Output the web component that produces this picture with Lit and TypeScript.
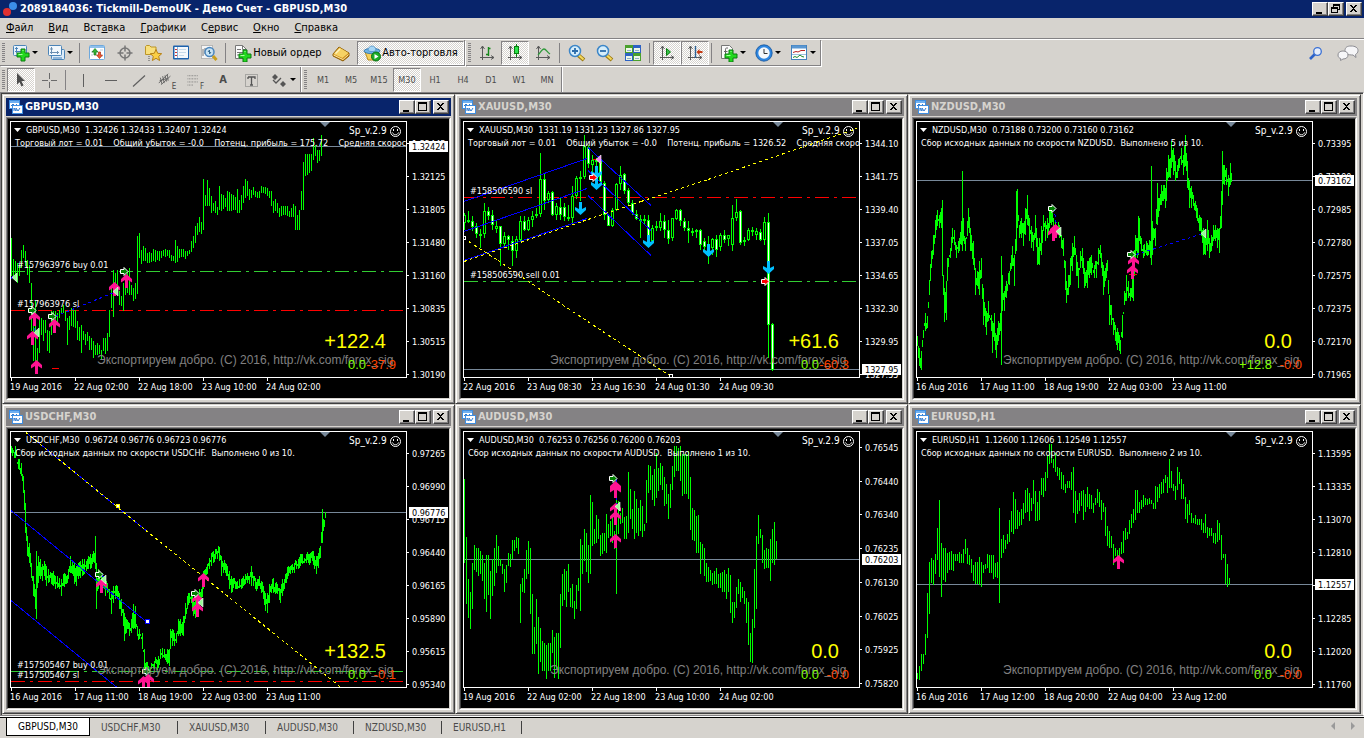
import { LitElement, html, svg, css, nothing } from "lit";
import { customElement, property } from "lit/decorators.js";
import { classMap } from "lit/directives/class-map.js";

type Mark = [kind: string, x: number, y: number];
type Line = [x1: number, y1: number, x2: number, y2: number, kind: string];
type Level = [y: number, color: string, label: string];

/* Series, marks and levels are stored in thirds of a pixel, counted from (ox, oy). */
interface Chart {
  id: string;
  active?: boolean;
  ox: number;
  oy: number;
  quote: string;
  comment: string;
  step?: number;
  noise?: number;
  bars?: string;
  candles?: string;
  prices: [number, string][];
  last: [number, string];
  times: string[];
  levels?: Level[];
  lines?: Line[];
  marks?: Mark[];
  total: string;
  plus: string;
  minus: string;
}

const CHARTS: Chart[] = [
  {
    id: "GBPUSD,M30", active: true, ox: 24, oy: 72, step: 6, noise: 4,
    quote: "1.32426 1.32433 1.32407 1.32424",
    comment: "Торговый лот = 0.01    Общий убыток = -0.0    Потенц. прибыль = 175.72    Средняя скорость",
    bars: "34:430,545 40:492,545 46:500,560 52:505,565 58:510,545 64:465,520 70:450,490 76:470,515 82:495,540 88:510,565 94:565,710 100:640,800 106:620,800 112:760,800 118:675,775 124:670,720 130:675,740 136:675,715 142:705,770 148:710,775 154:650,720 160:650,700 166:650,680 172:655,685 178:645,670 184:640,655 190:632,655 196:650,680 202:670,752 208:665,705 214:640,695 226:645,700 232:680,735 238:697,740 244:690,775 250:710,735 256:718,750 262:712,740 268:725,765 274:730,765 280:740,790 286:750,780 292:745,780 298:752,778 304:765,792 310:730,770 316:730,778 322:715,768 328:645,728 334:575,640 340:525,668 346:535,600 352:525,600 358:590,630 364:605,635 370:565,648 376:540,600 382:530,595 388:520,600 394:570,600 400:580,620 406:565,612 412:425,598 418:415,490 424:465,507 430:453,500 436:460,500 442:475,505 448:472,505 454:475,502 460:462,500 478:470,498 490:467,485 502:465,485 508:467,490 514:480,500 520:485,500 526:435,505 532:453,502 538:463,490 550:462,488 556:468,494 562:468,485 568:465,478 574:438,472 580:425,460 586:393,445 592:385,422 598:367,412 604:382,418 610:252,405 616:300,335 622:255,335 628:280,335 634:305,355 640:325,350 646:318,355 652:337,360 658:275,345 664:297,348 676:310,338 682:290,350 694:297,350 706:307,345 712:283,355 718:315,355 724:300,345 736:252,310 742:258,305 748:282,317 754:285,310 760:277,300 766:290,308 778:290,310 784:275,295 796:278,298 802:280,305 808:290,310 814:290,335 820:320,355 826:312,350 832:325,355 838:340,368 850:335,360 862:335,365 868:348,368 880:328,368 886:335,405 892:360,405 898:345,405 904:290,345 910:202,345 916:178,245 922:178,240 934:178,230 940:130,195 946:150,185 952:165,205 958:165,200 964:120,183",
    prices: [[145, "1.32445"], [244, "1.32125"], [343, "1.31805"], [442, "1.31480"], [541, "1.31160"], [640, "1.30835"], [739, "1.30515"], [838, "1.30190"]],
    last: [154, "1.32424"],
    times: ["19 Aug 2016", "22 Aug 02:00", "22 Aug 18:00", "23 Aug 10:00", "24 Aug 02:00"],
    levels: [[529, "#32cd32", "#157963976 buy 0.01"], [646, "#ff0000", "#157963976 sl"]],
    lines: [[34, 550, 40, 545, "blueDash"], [100, 645, 106, 712, "blueDash"], [166, 664, 343, 592, "blueDash"], [156, 820, 177, 820, "red"]],
    marks: [["up", 102, 652], ["up", 97, 708], ["up", 110, 797], ["up", 163, 672], ["up", 343, 562], ["up", 379, 538], ["buy", 96, 645], ["buy", 156, 664], ["buy", 373, 529], ["exit", 53, 547], ["exit", 119, 712], ["exit", 354, 589]],
    total: "+122.4", plus: "0.0", minus: "-37.9",
  },
  {
    id: "XAUUSD,M30", ox: 18, oy: 72,
    quote: "1331.19 1331.23 1327.86 1327.95",
    comment: "Торговый лот = 0.01    Общий убыток = -0.0    Потенц. прибыль = 1326.52    Средняя скорость",
    candles: "355,360,385,405u 348,375,378,385u 365,378,398,410d 385,395,418,430d 402,418,420,460d 325,348,418,430u 338,350,365,375d 345,362,390,405d 380,395,402,415u 393,395,447,515d 412,425,447,455u 422,424,437,465d 425,438,470,515d 425,432,470,490u 365,380,435,440u 365,380,405,410d 367,375,405,408u 350,363,375,398u 340,357,363,370u 175,252,357,367u 235,252,320,345d 290,295,315,325u 290,293,360,365d 325,335,362,375u 310,338,362,375d 325,338,368,378d 330,368,370,380u 275,305,370,385u 243,250,305,312u 230,247,250,320u 120,155,248,252u 150,157,207,220d 180,195,210,245u 190,196,200,250d 190,195,262,270d 260,265,362,375d 360,362,393,395d 340,347,395,397u 265,268,347,350u 213,240,268,285u 235,238,288,298d 280,285,325,330d 315,325,355,360d 345,357,373,375d 360,373,377,430d 362,373,378,390u 360,375,430,435d 390,400,440,448u 380,395,400,410u 355,380,400,410u 360,380,405,430d 375,405,433,447d 370,370,430,440u 343,345,372,375u 342,345,378,395d 370,380,400,410d 378,400,410,445d 400,410,412,425u 402,405,412,430d 402,405,452,465d 430,440,458,468d 425,460,485,507d 430,432,460,480u 420,432,465,488d 415,420,458,470u 405,420,435,445d 420,422,432,455u 330,370,452,470u 312,352,370,380u 345,350,445,450d 428,437,443,455u 400,405,437,440u 398,405,412,425d 400,408,422,435u 402,412,435,440d 368,383,437,450u 355,382,690,790d 685,688,825,828d",
    prices: [[145, "1344.10"], [244, "1341.75"], [343, "1339.40"], [442, "1337.05"], [541, "1334.65"], [640, "1332.30"], [739, "1329.95"], [838, "1327.55"]],
    last: [823, "1327.95"],
    times: ["22 Aug 2016", "23 Aug 08:30", "23 Aug 16:30", "24 Aug 01:30", "24 Aug 09:30"],
    levels: [[307, "#ff0000", "#158506590 sl"], [559, "#32cd32", "#158506590 sell 0.01"]],
    lines: [[28, 320, 397, 190, "blue"], [28, 409, 397, 281, "blue"], [28, 496, 397, 371, "blue"], [400, 157, 590, 331, "blue"], [400, 227, 590, 406, "blue"], [400, 302, 590, 482, "blue"], [28, 498, 400, 372, "yellow"], [400, 372, 560, 320, "yellow"], [560, 320, 760, 253, "yellow"], [760, 253, 1206, 100, "yellow"], [28, 430, 130, 497, "yellow"], [130, 497, 340, 640, "yellow"], [340, 640, 650, 845, "yellow"], [415, 194, 427, 194, "red"]],
    marks: [["down", 376, 322], ["down", 424, 215], ["down", 424, 247], ["down", 580, 421], ["down", 760, 448], ["down", 940, 499], ["sell", 415, 247], ["sell", 931, 559], ["pinkExit", 438, 194], ["box", 28, 430], ["box", 649, 845]],
    total: "+61.6", plus: "0.0", minus: "-60.3",
  },
  {
    id: "NZDUSD,M30", ox: 18, oy: 72, step: 3, noise: 34,
    quote: "0.73188 0.73200 0.73160 0.73162",
    comment: "Сбор исходных данных по скорости NZDUSD.  Выполнено 5 из 10.",
    bars: "28:725,755 34:760,815 40:770,825 46:705,730 52:655,710 58:665,700 64:555,600 70:470,520 76:420,480 82:375,430 88:345,395 94:360,400 100:340,400 103:315,545 106:540,600 109:580,683 115:560,675 118:490,560 127:460,490 133:400,445 139:405,450 145:450,490 154:430,470 160:380,450 163:230,470 166:370,440 172:430,470 178:380,425 181:340,400 187:400,470 196:440,510 202:520,600 208:530,575 214:500,600 220:490,550 226:580,690 234:650,720 242:620,680 250:660,710 254:680,775 260:655,740 265:720,790 271:680,740 277:655,710 280:485,810 283:540,650 289:590,650 295:560,610 304:530,570 313:455,515 319:480,575 325:290,470 328:282,400 334:390,430 340:370,430 346:385,455 352:340,420 358:300,390 364:370,440 370:395,460 376:420,470 382:360,430 388:430,510 394:430,510 400:395,480 406:360,410 412:380,440 418:370,430 424:350,400 430:345,390 436:370,400 442:380,410 454:390,430 460:420,460 466:430,485 472:500,585 475:560,625 481:540,600 487:490,570 493:445,530 499:425,480 505:480,545 511:520,580 517:470,520 523:460,520 530:520,580 538:500,580 545:490,550 551:480,540 560:510,550 566:500,550 572:460,510 578:450,490 586:510,600 592:520,560 598:495,530 604:600,690 610:630,690 616:670,720 622:690,740 628:700,765 634:720,770 637:735,778 643:660,730 649:590,630 655:540,620 661:560,610 667:580,620 673:530,610 676:470,620 682:420,490 688:430,490 691:365,480 694:370,440 700:430,470 706:450,490 715:440,480 721:450,480 727:440,490 730:215,510 733:380,480 742:400,455 748:265,390 754:310,350 760:270,330 766:270,320 772:280,340 775:220,320 781:180,250 787:190,250 790:140,220 796:160,240 802:200,260 808:210,250 814:190,220 820:160,210 826:180,240 832:122,215 838:200,280 844:260,340 850:275,340 856:300,335 862:320,350 868:340,380 874:360,410 880:370,425 886:400,480 892:420,480 898:375,470 904:430,490 910:420,470 916:390,440 922:390,440 928:400,460 934:400,475 940:290,400 943:168,330 949:210,270 955:220,270 961:240,305 967:205,270 970:235,262",
    prices: [[145, "0.73395"], [244, "0.73190"], [343, "0.72985"], [442, "0.72780"], [541, "0.72575"], [640, "0.72375"], [739, "0.72170"], [838, "0.71965"]],
    last: [256, "0.73162"],
    times: ["16 Aug 2016", "17 Aug 11:00", "18 Aug 19:00", "22 Aug 03:00", "23 Aug 11:00"],
    lines: [[439, 340, 448, 400, "blueDash"], [685, 477, 886, 415, "blueDash"], [664, 538, 688, 538, "red"]],
    marks: [["up", 436, 397], ["up", 442, 388], ["up", 676, 484], ["up", 673, 511], ["buy", 432, 340], ["buy", 670, 478], ["exit", 461, 409], ["exit", 896, 415]],
    total: "0.0", plus: "+12.8", minus: "-0.0",
  },
  {
    id: "USDCHF,M30", ox: 24, oy: 78, step: 3, noise: 30,
    quote: "0.96724 0.96776 0.96723 0.96776",
    comment: "Сбор исходных данных по скорости USDCHF.  Выполнено 0 из 10.",
    bars: "34:130,150 46:130,165 55:170,200 64:180,220 70:220,270 76:300,390 82:400,460 88:420,480 94:480,525 100:520,580 106:560,620 109:445,648 115:460,540 121:470,530 127:485,535 133:475,520 139:490,550 145:500,540 154:510,545 160:505,550 166:520,560 172:520,555 178:525,560 184:530,580 190:515,550 196:515,545 205:500,530 211:460,510 217:475,515 223:480,545 229:490,550 235:480,530 241:475,525 247:470,520 253:470,515 259:475,505 265:460,500 271:455,500 277:455,485 283:450,480 286:400,500 289:480,620 295:500,560 304:510,550 316:530,580 322:540,570 328:560,590 334:565,635 340:550,600 346:550,590 352:550,590 358:570,620 364:590,640 370:620,670 373:630,715 379:650,690 388:660,700 394:650,690 400:605,680 406:610,680 412:670,700 418:680,710 427:690,740 433:740,800 436:780,815 445:790,810 454:780,800 463:775,800 475:760,795 481:740,770 487:735,765 493:740,765 502:740,785 508:740,790 511:680,740 517:680,730 523:690,730 529:690,720 535:650,700 541:650,700 550:640,700 556:600,650 562:580,620 568:570,600 574:575,600 580:590,640 586:590,645 592:570,640 598:560,620 604:560,610 610:505,560 616:500,530 622:485,515 628:465,500 634:450,490 640:445,480 646:440,470 652:445,470 658:432,475 664:460,520 670:480,510 676:480,510 682:490,520 688:505,560 694:520,570 700:525,555 706:535,560 712:535,560 718:530,555 724:530,560 730:520,550 736:515,545 742:510,540 748:520,545 754:490,550 760:520,550 766:525,560 772:530,560 778:520,550 784:535,570 790:550,590 796:570,625 802:570,630 808:545,600 814:545,570 820:525,570 826:540,575 832:545,575 841:560,600 847:530,580 853:530,560 859:510,540 865:490,520 871:490,515 877:485,510 883:480,510 889:475,500 895:470,500 901:455,490 907:455,485 913:465,480 919:455,480 925:455,480 931:450,480 937:445,475 943:460,500 949:460,515 955:450,495 961:430,465 967:318,420 970:350,385 976:328,345",
    prices: [[151, "0.97265"], [250, "0.96990"], [349, "0.96715"], [448, "0.96440"], [547, "0.96165"], [646, "0.95890"], [745, "0.95615"], [844, "0.95340"]],
    last: [328, "0.96776"],
    times: ["16 Aug 2016", "17 Aug 11:00", "18 Aug 19:00", "22 Aug 03:00", "23 Aug 11:00"],
    levels: [[805, "#32cd32", "#157505467 buy 0.01"], [835, "#ff0000", "#157505467 sl"]],
    lines: [[78, 88, 440, 382, "blue"], [34, 322, 440, 655, "blue"], [34, 592, 352, 852, "blue"], [78, 88, 440, 382, "yellow"], [440, 382, 1024, 852, "yellow"], [307, 514, 313, 526, "blueDash"], [592, 570, 602, 600, "blueDash"]],
    marks: [["up", 304, 528], ["up", 610, 510], ["up", 592, 573], ["up", 592, 600], ["up", 430, 820], ["up", 445, 814], ["buy", 297, 514], ["buy", 586, 570], ["buy", 440, 805], ["exit", 320, 529], ["exit", 611, 598], ["box", 355, 311], ["blueBox", 442, 655]],
    total: "+132.5", plus: "0.0", minus: "-0.1",
  },
  {
    id: "AUDUSD,M30", ox: 18, oy: 78, step: 6, noise: 0,
    quote: "0.76253 0.76256 0.76200 0.76203",
    comment: "Сбор исходных данных по скорости AUDUSD.  Выполнено 1 из 10.",
    bars: "28:228,480 34:402,605 40:528,645 46:568,678 52:480,618 58:427,503 64:435,507 70:435,520 76:445,515 82:458,535 88:480,588 94:456,627 100:456,577 106:505,648 112:468,580 118:435,550 124:397,512 130:430,490 136:468,490 142:485,515 148:498,567 154:487,540 160:450,490 166:455,492 172:412,470 178:412,445 184:402,435 190:405,455 196:545,660 202:525,568 208:498,572 214:443,530 220:415,515 226:435,635 232:575,755 238:672,755 244:588,725 250:643,815 256:675,778 262:714,805 268:720,805 274:728,828 280:722,805 286:720,805 292:682,752 298:703,825 304:690,800 310:690,828 316:575,735 322:515,610 328:500,592 334:505,612 340:483,568 346:555,612 352:545,615 358:595,650 364:548,618 370:525,565 376:410,625 382:427,515 388:380,475 394:390,508 400:428,540 406:277,515 412:298,430 418:380,425 424:337,420 430:350,408 436:397,460 442:390,455 448:390,445 454:335,450 460:365,405 466:355,400 472:335,420 478:385,440 484:290,575 490:295,395 496:330,365 502:315,362 508:342,410 514:340,408 520:207,390 526:260,348 532:320,380 538:265,410 544:288,390 550:315,400 556:292,385 562:310,403 568:365,385 574:232,360 580:187,270 586:190,262 592:217,292 598:200,310 604:150,285 610:195,265 616:182,248 622:190,262 628:222,310 634:245,305 640:275,350 646:245,315 652:190,262 658:130,222 664:130,205 670:135,205 676:130,235 682:155,280 688:155,275 694:155,275 700:145,290 706:222,382 712:315,412 718:322,415 724:340,450 730:337,452 736:417,515 742:425,470 748:437,520 754:480,537 760:492,538 766:502,535 772:512,547 778:505,545 784:495,545 790:513,555 796:512,555 802:507,567 808:502,567 814:515,588 820:495,567 826:518,630 832:597,662 838:597,645 844:552,615 850:528,575 856:537,597 862:552,585 868:565,605 874:585,660 880:597,728 886:690,777 892:648,782 898:498,675 904:400,618 910:337,425 916:378,405 922:397,480 928:443,500 934:435,495 940:440,497 946:408,535 952:380,480 958:357,488 964:415,468",
    prices: [[133, "0.76545"], [235, "0.76440"], [334, "0.76340"], [436, "0.76235"], [538, "0.76130"], [640, "0.76025"], [739, "0.75925"], [841, "0.75820"]],
    last: [469, "0.76203"],
    times: ["19 Aug 2016", "22 Aug 02:00", "22 Aug 18:00", "23 Aug 10:00", "24 Aug 02:00"],
    lines: [[484, 226, 484, 310, "blueDash"]],
    marks: [["up", 481, 235], ["up", 481, 244], ["up", 481, 300], ["up", 481, 324], ["up", 481, 393], ["buy", 475, 227], ["exit", 497, 311]],
    total: "0.0", plus: "0.0", minus: "-0.0",
  },
  {
    id: "EURUSD,H1", ox: 18, oy: 78, step: 6, noise: 0,
    quote: "1.12600 1.12606 1.12549 1.12557",
    comment: "Сбор исходных данных по скорости EURUSD.  Выполнено 2 из 10.",
    bars: "28:812,830 34:790,833 40:753,805 46:753,785 52:693,758 58:570,705 64:477,635 70:465,542 76:472,547 82:455,515 88:375,472 94:292,522 100:420,582 106:437,533 112:435,537 118:450,512 124:447,502 130:445,502 136:453,505 142:455,475 148:453,475 154:447,480 160:455,480 166:440,482 172:410,455 178:437,485 184:457,487 190:468,510 196:487,535 202:477,545 208:477,545 214:462,547 220:477,552 226:488,510 232:485,500 238:455,495 244:457,512 250:457,512 256:457,530 262:480,522 268:477,525 274:315,602 280:410,465 286:397,452 292:413,440 298:393,425 304:352,417 310:325,387 316:267,395 322:288,380 328:322,380 334:327,370 340:320,367 346:300,348 352:262,330 358:255,327 364:272,355 370:285,325 376:232,305 382:265,355 388:297,355 394:265,352 400:225,278 406:225,282 412:207,265 418:160,225 424:125,185 430:125,182 436:170,195 442:150,207 448:192,220 454:195,232 460:207,258 466:217,262 472:245,272 478:235,257 484:235,255 490:207,262 496:192,330 502:265,362 508:292,335 514:272,325 520:265,310 526:262,352 532:273,327 538:252,312 544:275,320 550:277,320 556:300,330 562:285,308 568:258,300 574:267,312 580:293,353 586:300,327 592:312,400 598:370,430 604:385,437 610:400,437 616:425,488 622:435,460 628:442,470 634:435,470 640:418,455 646:385,452 652:375,413 658:387,410 664:352,395 670:333,375 676:320,362 682:262,353 688:262,332 694:297,330 700:292,318 706:277,312 712:285,307 718:288,308 724:285,305 730:292,305 736:300,320 742:250,320 748:252,297 754:243,285 760:237,273 766:228,272 772:218,242 778:222,272 784:168,255 790:205,257 796:243,265 802:250,292 808:192,262 814:207,245 820:228,290 826:243,290 832:282,350 838:303,360 844:292,337 850:330,362 856:347,362 862:337,365 868:348,368 874:348,367 880:350,382 886:360,392 892:333,390 898:372,405 904:375,400 910:375,400 916:390,422 922:390,425 928:353,418 934:360,412 940:397,472 946:455,467 952:453,543 958:485,552 964:525,548",
    prices: [[151, "1.13595"], [250, "1.13335"], [349, "1.13070"], [448, "1.12810"], [547, "1.12550"], [646, "1.12285"], [745, "1.12020"], [844, "1.11760"]],
    last: [544, "1.12557"],
    times: ["16 Aug 2016", "17 Aug 12:00", "18 Aug 20:00", "22 Aug 04:00", "23 Aug 12:00"],
    marks: [["up", 631, 457]],
    total: "0.0", plus: "0.0", minus: "-0.0",
  },
];

const AXES = svg`<path d="M3.5 1v14M1 12.500h14M1.500 4l2-3 2 3M12 10.500l3 2-3 2" fill="none" stroke="#5a5a5a"/>`;
const PLUS = svg`<path d="M9 6h4v4h4v4h-4v4h-4v-4h-4v-4h4z" fill="#22d81e" stroke="#0a7d10"/><path d="M10.500 7.500h1M6.500 11.500h4" stroke="#a8ffa0"/>`;
const HANDLE = svg`<path d="M10 11l6 5" stroke="#9c7a12" stroke-width="4"/><path d="M10.500 11l5 4.500" stroke="#f5d95c" stroke-width="2"/>`;

const ICONS: Record<string, unknown> = {
  newChart: svg`<rect x="1.500" y="1.500" width="13" height="10" rx="1" fill="#e9f3fc" stroke="#4b84b8"/><path d="M4.500 3v6M3 7.500h7M3 4.500h3" stroke="#4b84b8"/><g transform="translate(0 -1)">${PLUS}</g>`,
  profiles: svg`<rect x="4.500" y="5.500" width="13" height="10" rx="1" fill="#dcebf8" stroke="#4b84b8"/><rect x="1.500" y="1.500" width="13" height="10" rx="1" fill="#f2f8fd" stroke="#4b84b8"/><path d="M4.500 3v7M3 8.500h9M10.500 7v3M3 5h3" stroke="#6b8fb2"/><path d="M6 14h9" stroke="#8fb6da" stroke-width="2"/>`,
  market: svg`<rect x="1.500" y="1.500" width="15" height="14" rx="1" fill="#fff" stroke="#6ea8dc"/><path d="M2 3h14" stroke="#8fc0ec" stroke-width="2"/><path d="M3 8h2M3 11h2M12 6h3M12 12h3" stroke="#b9c9d8"/><path d="M4 8l3-3.500 3 3.500h-2v3h-2v-3z" fill="#35b335" stroke="#1a7d1a" stroke-width=".7"/><path d="M8.500 11l3 3.500 3-3.500h-2V8h-2v3z" fill="#ee5a34" stroke="#b02b10" stroke-width=".7"/>`,
  cross: svg`<circle cx="9" cy="9" r="5" fill="none" stroke="#777" stroke-width="1.500"/><path d="M9 1.500v6M9 10.500v6M1.500 9h6M10.500 9h6" stroke="#777" stroke-width="1.500"/>`,
  star: svg`<path d="M1.500 10.500V2.500l1-1h3l1.500 1.500h5v7.500z" fill="#f8df7c" stroke="#bb9528"/><path d="M5 12v5" stroke="#555" stroke-dasharray="1 1"/><path d="M12 5.500l1.700 3.800 4 .4-3 2.700.9 4.100-3.600-2.200-3.600 2.200.9-4.100-3-2.700 4-.4z" fill="#fbcf45" stroke="#b78116"/>`,
  terminal: svg`<rect x="1" y="1.500" width="16" height="14" rx="1" fill="#1d62ad"/><rect x="6" y="3" width="10" height="11" fill="#f4f8fc"/><rect x="2.500" y="3" width="3" height="11" fill="#fff"/><path d="M3 5.500h2M3 8.500h2M3 11.500h2" stroke="#c33"/><path d="M7 5.500h7M7 8.500h7M7 11.500h5" stroke="#c5d9ea"/>`,
  tester: svg`<rect x="1.500" y="1.500" width="11" height="13" fill="#f5f5f5" stroke="#8b8b8b" stroke-dasharray="1 1"/><path d="M3 12V5M5 10V4M10 5V3" stroke="#777"/><circle cx="9.500" cy="8" r="4.500" fill="#bfe0f5" fill-opacity=".85" stroke="#4b86bd" stroke-width="1.500"/><path d="M13 12l3.500 4" stroke="#c99f1d" stroke-width="3"/><path d="M8 8l1.500-2v4l1.500-2" fill="none" stroke="#35688f"/>`,
  order: svg`<path d="M1.500 1.500h7l4 4v9h-11z" fill="#fafafa" stroke="#777"/><path d="M8.500 1.500v4h4M3 5.500h4M3 8.500h7M3 11h5" fill="none" stroke="#777"/>${PLUS}`,
  gold: svg`<path d="M1 10l6-7 10 6v3l-6 5L1 12z" fill="#c98512" stroke="#8f5f06"/><path d="M1.500 10L7.500 3.500l9 5.500-6 5z" fill="#f6d264"/><path d="M3.500 9.500l4.500-4.500" stroke="#fff3bd" stroke-width="1.500"/><path d="M1.500 11l9.500 4.500 5.500-5" fill="none" stroke="#fce9a4"/>`,
  auto: svg`<path d="M2 8l3 8h8l3-8z" fill="#f6d05a" stroke="#b98c1c"/><ellipse cx="9" cy="7" rx="8" ry="2.700" fill="#6fb4e6" stroke="#2b6ea5" stroke-width=".8"/><path d="M5 6.500c0-6 8-6 8 0-2 1.500-6 1.500-8 0z" fill="#a6d6f5" stroke="#4b8fc4" stroke-width=".8"/><circle cx="13" cy="12.500" r="4.500" fill="#1cae28" stroke="#087012"/><path d="M11.500 10l4 2.500-4 2.500z" fill="#fff"/>`,
  bars: svg`<g transform="translate(1 1)">${AXES}</g><path d="M10.500 3v9M10.500 4.500h2M8 10.500h2" stroke="#16881b" stroke-width="1.400"/>`,
  candles: svg`<g transform="translate(1 1)">${AXES}</g><path d="M10.500 0v13" stroke="#0a7d10"/><rect x="8.500" y="2.500" width="4" height="7" fill="#2be34a" stroke="#0a7d10"/>`,
  line: svg`<g transform="translate(1 1)">${AXES}</g><path d="M4 11c2-2 4-6 6-6s3 3 6 5" fill="none" stroke="#2e9a3a" stroke-width="1.300"/>`,
  zoomIn: svg`${HANDLE}<circle cx="7" cy="7" r="5.500" fill="#d6eefb" stroke="#3c86c8" stroke-width="1.500"/><path d="M4 7h6M7 4v6" stroke="#2b6cab" stroke-width="1.800"/>`,
  zoomOut: svg`${HANDLE}<circle cx="7" cy="7" r="5.500" fill="#d6eefb" stroke="#3c86c8" stroke-width="1.500"/><path d="M4 7h6" stroke="#2b6cab" stroke-width="1.800"/>`,
  tile: svg`<rect x="1" y="1" width="8" height="8" fill="#4aa02c"/><rect x="9" y="1" width="8" height="8" fill="#2d62c4"/><rect x="1" y="9" width="8" height="8" fill="#2d62c4"/><rect x="9" y="9" width="8" height="8" fill="#4aa02c"/><path d="M2 6h6M10 6h6M2 14h6M10 14h6" stroke="#eef7e8" stroke-width="4"/><path d="M3 6.500h4M11 6.500h4M3 14.500h4M11 14.500h4" stroke="#8fb0c8"/>`,
  scroll: svg`<g transform="translate(1 1)">${AXES}</g><path d="M8.500 4.500l4 3.500-4 3.500z" fill="#35c048" stroke="#0a7d10"/>`,
  shift: svg`<g transform="translate(1 1)">${AXES}</g><path d="M9.500 2v12" stroke="#2c6396" stroke-width="1.400"/><path d="M10.500 8l3-3v2h3v2h-3v2z" fill="#c63a12"/>`,
  indicators: svg`<path d="M1.500 1.500h8l3 3v10h-11z" fill="#fafafa" stroke="#777"/><path d="M8 4h-1.500c-1 0-1 1-1 2v6M4 7.500h3.500" stroke="#666" fill="none"/>${PLUS}`,
  clock: svg`<circle cx="9" cy="9" r="7" fill="#f5f8fb" stroke="#2f86e0" stroke-width="2.600"/><circle cx="9" cy="9" r="8.200" fill="none" stroke="#0d4a91" stroke-width=".7"/><path d="M9 5v4.500h3.500" fill="none" stroke="#333"/>`,
  template: svg`<rect x="1.500" y="1.500" width="15" height="14" fill="#fff" stroke="#4381bd"/><path d="M2 3h14" stroke="#5a97d2" stroke-width="3"/><path d="M3 8.500l3-1 2 .5 3-1.500h4" fill="none" stroke="#b22"/><path d="M3 13.500l2-1 2 1 3-2.500 2 1.500 2 .5" fill="none" stroke="#1b8a2a"/><path d="M2 10.500h14" stroke="#9fc0de"/>`,
  cursor: svg`<path d="M5 2l8 8H9.500l2 4.500-2 1-2-4.500L5 13.500z" fill="#4b4b4b"/>`,
  plus: svg`<path d="M9.500 2v6M9.500 11v6M2 9.500h6M11 9.500h6" stroke="#6b6b6b"/>`,
  vline: svg`<path d="M9.500 3v13" stroke="#5f5f5f"/>`,
  hline: svg`<path d="M3 9.500h12" stroke="#5f5f5f"/>`,
  trend: svg`<path d="M3 15.500L15 4.500" stroke="#5f5f5f" stroke-width="1.200"/>`,
  channel: svg`<path d="M1 13L13 1M4 15L16 4M3 6l2 8M6 4l2 9M9 3l2 8M12 2l1 8M2 10l10-3" stroke="#5b5b5b" stroke-width="1.100"/>`,
  fibo: svg`<path d="M2 3.500h14M2 7.500h14M2 11.500h14M2 15.500h7" stroke="#666" stroke-dasharray="1 1"/>`,
  text: svg`<rect x="3.500" y="3.500" width="12" height="12" fill="none" stroke="#777" stroke-dasharray="1 1"/><path d="M6 6h7v2M6 8V6M9.500 6v8M8 14h3" fill="none" stroke="#555" stroke-width="1.300"/>`,
  arrows: svg`<path d="M2 6l3-3 3 3-3 3zM10 13l3-3 3 3-3 3z" fill="#555"/><path d="M3 9l3 3 5-5" fill="none" stroke="#555" stroke-width="1.300"/>`,
  search: svg`<path d="M3 15l5-5" stroke="#2c62c8" stroke-width="2.600"/><circle cx="10.500" cy="7.500" r="3.800" fill="#e6eefb" stroke="#3a70d4" stroke-width="1.300"/>`,
};

const icon = (name: string) => html`<svg class="icon" viewBox="0 0 18 18" aria-hidden="true">${ICONS[name]}</svg>`;

const CAPTION = {
  min: svg`<path d="M3 9h6v2H3z" fill="#000"/>`,
  max: svg`<path d="M2 1h9v9H2zM3 3v6h7V3z" fill="#000" fill-rule="evenodd"/>`,
  restore: svg`<path d="M4 1h7v6H9V6h1V3H5v1H4zM2 4h7v6H2zM3 6v3h5V6z" fill="#000" fill-rule="evenodd"/>`,
  close: svg`<path d="M3 2h2v1h1v1h1V3h1V2h2v1H9v1H8v1H7v1h1v1h1v1h1v1H8V8H7V7H6v1H5v1H3V8h1V7h1V6h1V5H5V4H4V3H3z" fill="#000" shape-rendering="crispEdges"/>`,
};

const captionStyles = css`
  .cap {
    box-sizing: border-box;
    width: 16px;
    height: 14px;
    padding: 0;
    border: 1px solid;
    border-color: #fff #404040 #404040 #fff;
    box-shadow: inset -1px -1px #848284;
    background: #d6d3ce;
    display: block;
  }
  .cap svg { display: block; width: 13px; height: 12px; }
  .cap.gap { margin-left: 2px; }
`;

const capButton = (kind: keyof typeof CAPTION, label: string, gap = false) => html`
  <button class=${classMap({ cap: true, gap })} aria-label=${label}><svg viewBox="0 0 13 12">${CAPTION[kind]}</svg></button>`;

@customElement("chart-window")
export class ChartWindow extends LitElement {
  @property({ attribute: false }) chart!: Chart;

  static styles = [captionStyles, css`
    :host { display: block; min-width: 0; font-family: "DejaVu Sans Condensed", "DejaVu Sans", sans-serif; }
    .frame {
      box-sizing: border-box;
      height: 100%;
      display: flex;
      flex-direction: column;
      border: 1px solid;
      border-color: #d6d3ce #404040 #404040 #d6d3ce;
      box-shadow: inset 1px 1px #fff, inset -1px -1px #848284;
      background: #d6d3ce;
      padding: 3px;
    }
    .bar {
      display: flex;
      align-items: center;
      height: 18px;
      padding: 0 2px 0 3px;
      background: #848284;
      color: #d6d3ce;
    }
    .bar.active { background: #08246b; color: #fff; }
    .bar .name { flex: 1; margin: 0; font-size: 11px; line-height: 18px; padding-left: 2px; }
    .doc { width: 14px; height: 14px; }
    .client {
      flex: 1;
      min-height: 0;
      margin-top: 1px;
      border: 1px solid;
      border-color: #848284 #fff #fff #848284;
      display: flex;
    }
    .canvas {
      flex: 1;
      min-width: 0;
      border: 1px solid;
      border-color: #404040 #d6d3ce #d6d3ce #404040;
      background: #000;
      overflow: hidden;
    }
    .plot { display: block; width: 100%; height: 100%; }
    text { fill: #fff; font-size: 9px; white-space: pre; }
    .version { font-size: 10px; }
    .dark { fill: #000; }
    .mark { font-family: "Liberation Sans", Arial, sans-serif; font-size: 12px; fill: #808080; }
    .total { font-family: "Liberation Sans", Arial, sans-serif; font-size: 20px; fill: #ff0; }
    .sub { font-family: "Liberation Sans", Arial, sans-serif; font-size: 13px; }
    .plus { fill: #7fff00; }
    .minus { fill: #ff4500; }
    .blue { stroke: #00f; }
    .blueDash { stroke: #00f; stroke-dasharray: 3 3; }
    .yellow { stroke: #ff0; stroke-dasharray: 3 3; }
    .red { stroke: #f00; }
  `];

  private px(v: number) { return Math.floor((v - this.chart.ox) / 3); }
  private py(v: number) { return Math.floor((v - this.chart.oy) / 3); }

  private barPath() {
    const { bars, step = 6, noise = 0 } = this.chart;
    if (!bars) return "";
    const keys = bars.split(" ").map((k) => k.split(/[:,]/).map(Number));
    let seed = 7;
    const rnd = () => { seed = (seed * 1103515245 + 12345) % 2147483648; return seed / 2147483648 - 0.5; };
    let d = "";
    for (let i = 0; i < keys.length; i++) {
      const [x0, h0, l0] = keys[i];
      const [x1, h1, l1] = keys[i + 1] ?? [x0 + step, h0, l0];
      for (let x = x0; x < x1; x += step) {
        const t = (x - x0) / (x1 - x0);
        const j = t === 0 ? 0 : noise;
        const inset = t === 0 || step > 3 ? 0 : (l0 - h0 + (l1 - h1)) * 0.12;
        const top = this.py(h0 + (h1 - h0) * t + inset + rnd() * j);
        const end = this.py(l0 + (l1 - l0) * t - inset + rnd() * j);
        d += `M${this.px(x)} ${top}h1V${Math.max(end, top + 2)}h-1z`;
      }
    }
    return d;
  }

  private candleShapes() {
    const { candles } = this.chart;
    if (!candles) return nothing;
    return candles.split(" ").map((c, i) => {
      const [hi, top, bot, lo] = c.slice(0, -1).split(",").map((v) => this.py(Number(v)));
      const x = this.px(28 + i * 12);
      return svg`<path d="M${x + 0.5} ${hi}V${lo}" stroke="#0f0"/><rect x=${x - 0.5} y=${top + 0.5} width="2" height=${Math.max(bot - top - 1, 1)} fill=${c.endsWith("d") ? "#fff" : "#000"} stroke="#0f0"/>`;
    });
  }

  private markShape([kind, mx, my]: Mark) {
    const at = `translate(${this.px(mx)} ${this.py(my)})`;
    const lower = this.chart.oy === 78;
    switch (kind) {
      case "up": return svg`<path transform=${at} d="M.5 0L6 5v3.500L2 6v8h-3V6l-4 2.500V5z" fill="#ff1493"/>`;
      case "down": return svg`<path transform=${at} d="M.5 13L6 8V5L2 7V0h-3v7l-4-2v3z" fill="#00bfff"/>`;
      case "buy":
      case "sell": return svg`<path transform=${at} d="M0-3.500L4 .5 0 4.500V2.500H-3.500V-1.500H0z" fill=${kind === "buy" ? "#008000" : "#f00"} stroke="#fff"/>`;
      case "exit": return svg`<path transform=${at} d="M0-4v9l-5-4.500z" fill="#98fb98" stroke="#fff" stroke-width=".6"/>`;
      case "pinkExit": return svg`<path transform=${at} d="M0-4v9l-5-4.500z" fill="#ee82ee" stroke="#fff" stroke-width=".6"/>`;
      case "blueBox": return svg`<rect transform=${at} x="-1.500" y="-1.500" width="4" height="4" fill="#fff" stroke="#00f"/>`;
      default: return svg`<rect transform=${at} x="-1.500" y="-1.500" width="3" height="3" fill=${lower ? "#fff" : "#000"} stroke=${lower ? "#ff0" : "#fff"}/>`;
    }
  }

  render() {
    const c = this.chart;
    const lastY = this.py(c.last[0]);
    return html`
      <section class="frame" aria-label=${c.id}>
        <header class=${classMap({ bar: true, active: !!c.active })}>
          <svg class="doc" viewBox="0 0 14 14" aria-hidden="true">
            <rect x=".5" y=".5" width="10" height="8" fill="#fff" stroke="#3f8ee0" />
            <path d="M1 2h9" stroke="#6fb0f0" stroke-width="2" />
            <path d="M2 6l2-2 2 2 2-2" fill="none" stroke="#2f7ad0" />
            <rect x="3.500" y="5.500" width="10" height="8" fill="#fff" stroke="#3f8ee0" />
            <path d="M5 11V8l2 3V8l2 3 2-3" fill="none" stroke="#2f7ad0" />
          </svg>
          <h2 class="name">${c.id}</h2>
          ${capButton("min", "Свернуть")}${capButton("max", "Развернуть")}${capButton("close", "Закрыть", true)}
        </header>
        <div class="client"><div class="canvas">
          <svg class="plot" role="img" aria-label=${c.id}>
            <defs><clipPath id="clip"><rect x="3" y="3" width="395" height="255" /></clipPath></defs>
            <path d="M2 2h397v257H2zM3 3v255h395V3z" fill="#fff" fill-rule="evenodd" />
            <g clip-path="url(#clip)">
              <path d="M3 ${lastY + 0.5}h395" stroke="#778899" />
              ${(c.levels ?? []).map(([y, color]) => svg`<path d="M3 ${this.py(y) + 0.5}h392" stroke=${color} stroke-dasharray="14 5 3 5"/>`)}
              <path d=${this.barPath()} fill="#0f0" shape-rendering="crispEdges" />
              ${this.candleShapes()}
              ${(c.lines ?? []).map(([x1, y1, x2, y2, kind]) => svg`<line class=${kind} x1=${this.px(x1)} y1=${this.py(y1) + 0.5} x2=${this.px(x2)} y2=${this.py(y2) + 0.5} shape-rendering="crispEdges"/>`)}
              ${(c.marks ?? []).map((m) => this.markShape(m))}
              <path d="M312 3h10l-5 5z" fill="#778899" />
              <path d="M6 9h7l-3.500 4z" fill="#fff" />
              <text x="18" y="14">${c.id}  ${c.quote}</text>
              <text x="7" y="27">${c.comment}</text>
              <text class="version" x="341" y="15">Sp_v.2.9</text>
              <g fill="none" stroke="#fff"><circle cx="387.500" cy="12.500" r="5" /><path d="M384.500 13.500c1 3 5 3 6 0M385.500 10v2M389.500 10v2" /></g>
              ${(c.levels ?? []).map(([y, , label]) => svg`<text x="9" y=${this.py(y) - 3}>${label}</text>`)}
              <text class="mark" x="89" y="245">Экспортируем добро. (C) 2016, http://vk.com/forex_sig</text>
              <text class="total" x="378" y="229" text-anchor="end">${c.total}</text>
              <text class="sub plus" x="358" y="250" text-anchor="end">${c.plus}</text>
              <text class="sub minus" x="388" y="250" text-anchor="end">${c.minus}</text>
            </g>
            ${c.prices.map(([y, label]) => svg`<path d="M399 ${this.py(y) + 0.5}h2" stroke="#fff"/><text x="404" y=${this.py(y) + 4}>${label}</text>`)}
            <rect x="401" y=${lastY - 5} width="39" height="11" fill="#fff" />
            <text class="dark" x="404" y=${lastY + 4}>${c.last[1]}</text>
            ${c.times.map((label, i) => svg`<path d="M${3.5 + i * 64} 259v3" stroke="#fff"/><text x=${2 + i * 64} y="271">${label}</text>`)}
          </svg>
        </div></div>
      </section>`;
  }
}

interface Tool { icon?: string; text?: string; label: string; menu?: boolean; on?: boolean; sep?: boolean; kind?: string }
const SEP: Tool = { label: "", sep: true };

const STANDARD: Tool[] = [
  { icon: "newChart", label: "Новый график", menu: true }, { icon: "profiles", label: "Профили", menu: true }, SEP,
  { icon: "market", label: "Обзор рынка" }, { icon: "cross", label: "Окно данных" }, { icon: "star", label: "Навигатор" },
  { icon: "terminal", label: "Терминал" }, { icon: "tester", label: "Тестер стратегий" }, SEP,
  { icon: "order", text: "Новый ордер", label: "Новый ордер", kind: "order" }, { icon: "gold", label: "MetaEditor" },
  { icon: "auto", text: "Авто-торговля", label: "Авто-торговля", on: true, kind: "auto" },
];
const CHARTING: Tool[] = [
  { icon: "bars", label: "Бары" }, { icon: "candles", label: "Японские свечи", on: true }, { icon: "line", label: "Линия" }, SEP,
  { icon: "zoomIn", label: "Увеличить" }, { icon: "zoomOut", label: "Уменьшить" }, { icon: "tile", label: "Расположить окна" }, SEP,
  { icon: "scroll", label: "Автопрокрутка", on: true }, { icon: "shift", label: "Сдвиг графика", on: true }, SEP,
  { icon: "indicators", label: "Индикаторы", menu: true }, { icon: "clock", label: "Периоды", menu: true }, { icon: "template", label: "Шаблоны", menu: true },
];
const DRAWING: Tool[] = [
  { icon: "cursor", label: "Курсор", on: true }, { icon: "plus", label: "Перекрестие" }, SEP,
  { icon: "vline", label: "Вертикальная линия" }, { icon: "hline", label: "Горизонтальная линия" }, { icon: "trend", label: "Трендовая линия" },
  { icon: "channel", label: "Канал", text: "E", kind: "lettered" }, { icon: "fibo", label: "Линии Фибоначчи", text: "F", kind: "lettered" },
  { text: "A", label: "Текст", kind: "letter" }, { icon: "text", label: "Текстовая метка" }, { icon: "arrows", label: "Стрелки", menu: true },
];
const PERIODS: Tool[] = ["M1", "M5", "M15", "M30", "H1", "H4", "D1", "W1", "MN"].map((t) => ({ text: t, label: t, on: t === "M30", kind: "period" }));

const MENUS: [string, string, string][] = [["", "Ф", "айл"], ["", "В", "ид"], ["Вст", "а", "вка"], ["", "Г", "рафики"], ["С", "е", "рвис"], ["", "О", "кно"], ["", "С", "правка"]];
const TABS = ["GBPUSD,M30", "USDCHF,M30", "XAUUSD,M30", "AUDUSD,M30", "NZDUSD,M30", "EURUSD,H1"];

@customElement("app-root")
export class AppRoot extends LitElement {
  static styles = [captionStyles, css`
    :host {
      display: flex;
      flex-direction: column;
      min-height: 100vh;
      background: #d6d3ce;
      color: #000;
      font: 11px "DejaVu Sans Condensed", "DejaVu Sans", sans-serif;
    }
    button { font: inherit; color: inherit; }
    .title { display: flex; align-items: center; height: 18px; padding: 0 2px; background: #08246b; color: #fff; }
    .title h1 { flex: 1; margin: 0; padding-left: 2px; font-size: 11px; line-height: 18px; }
    .logo { width: 16px; height: 16px; }
    .menu { display: flex; height: 20px; align-items: center; border-bottom: 1px solid #848284; box-shadow: 0 1px #fff; margin-bottom: 1px; }
    .menu button { border: 0; background: none; padding: 0 0 0 6px; margin-right: 9px; line-height: 18px; }
    .tools { display: flex; align-items: flex-start; }
    .group { display: flex; align-items: center; height: 25px; padding-left: 2px; border: 0 solid #848284; border-width: 0 1px 1px 0; box-shadow: 1px 1px #fff; margin-right: 1px; }
    .group.standard { margin-bottom: 1px; }
    .group.low { border-bottom: 0; box-shadow: 1px 0 #fff; }
    .grip { width: 3px; height: 19px; margin-right: 2px; background: repeating-linear-gradient(#848284 0 1px, #d6d3ce 1px 2px); }
    .spacer { flex: 1; }
    .tool {
      box-sizing: border-box;
      width: 28px;
      height: 24px;
      padding: 0;
      display: flex;
      align-items: center;
      justify-content: center;
      background: none;
      border: 1px solid transparent;
      white-space: nowrap;
    }
    .tool.menu-tool { width: 35px; gap: 2px; }
    .tool.menu-tool::after { content: ""; border: 3px solid transparent; border-top-color: #000; border-bottom: 0; }
    .tool.order { width: 98px; gap: 1px; }
    .tool.auto { width: 107px; margin-left: 2px; gap: 1px; }
    .tool.on {
      border-color: #848284 #fff #fff #848284;
      background: repeating-conic-gradient(#fff 0 25%, #d6d3ce 0 50%) 0 0 / 2px 2px;
    }
    .tool.period { color: #4b4b4b; font-size: 9px; }
    .tool.letter { color: #4b4b4b; font-size: 11px; font-weight: bold; }
    .tool.lettered { font-size: 8px; color: #4b4b4b; align-items: flex-end; }
    .tool.lettered .icon { width: 14px; height: 16px; align-self: center; }
    .icon { width: 18px; height: 18px; flex: none; }
    .sep { width: 1px; height: 20px; margin: 0 3px 0 2px; background: #848284; }
    .side { display: flex; align-items: center; gap: 12px; height: 26px; padding-right: 5px; }
    .side button { border: 0; padding: 0; background: none; display: flex; }
    .chat { width: 22px; height: 16px; }
    .desk {
      flex: 1;
      display: grid;
      grid-template-columns: repeat(3, minmax(0, 1fr));
      grid-template-rows: repeat(2, minmax(300px, 1fr));
      border: 1px solid;
      border-color: #848284 #fff #848284 #848284;
      box-shadow: inset 1px 1px #404040;
      padding: 1px 2px 1px 1px;
    }
    .tabs { display: flex; align-items: flex-start; height: 20px; margin-top: 1px; border-top: 1px solid #000; padding-left: 6px; color: #4b4b4b; box-shadow: 0 -1px #fff; }
    .tab { box-sizing: border-box; width: 88px; height: 18px; padding: 0; border: 0; background: none; font-size: 10px; display: flex; align-items: center; justify-content: center; }
    .tab::after { content: ""; width: 1px; height: 13px; background: #404040; margin-left: auto; }
    .tab .txt { margin-left: 11px; }
    .tab.short { width: 80px; }
    .tab.active { width: 84px; background: #fff; color: #000; border: 1px solid #000; border-top: 0; }
    .tab.active::after { content: none; }
    .tab.active .txt { margin: 0; }
    .arrows { margin-left: auto; display: flex; gap: 14px; padding: 4px 9px 0 0; }
    .arrows button { border: 0; padding: 0; background: none; display: flex; }
    .arrows svg { width: 5px; height: 8px; }
  `];

  private tool(t: Tool) {
    if (t.sep) return html`<span class="sep"></span>`;
    const classes = { tool: true, on: !!t.on, "menu-tool": !!t.menu, [t.kind ?? "plain"]: true };
    return html`<button class=${classMap(classes)} aria-label=${t.label}>${t.icon ? icon(t.icon) : nothing}${t.text ?? nothing}</button>`;
  }

  render() {
    return html`
      <header class="title">
        <svg class="logo" viewBox="0 0 16 16" aria-hidden="true"><circle cx="11" cy="5" r="4" fill="#3b8de8" /><circle cx="5" cy="11" r="4" fill="#e03030" /></svg>
        <h1>2089184036: Tickmill-DemoUK - Демо Счет - GBPUSD,M30</h1>
        ${capButton("min", "Свернуть")}${capButton("restore", "Восстановить")}${capButton("close", "Закрыть", true)}
      </header>
      <nav class="menu">${MENUS.map(([a, u, b]) => html`<button>${a}<u>${u}</u>${b}</button>`)}</nav>
      <div class="tools">
        <div class="group standard"><span class="grip"></span>${STANDARD.map((t) => this.tool(t))}</div>
        <div class="group standard"><span class="grip"></span>${CHARTING.map((t) => this.tool(t))}</div>
        <span class="spacer"></span>
        <div class="side">
          <button aria-label="Поиск">${icon("search")}</button>
          <button aria-label="Чат"><svg class="chat" viewBox="0 0 22 16" aria-hidden="true">
            <path d="M14 1c4 0 7 1.500 7 4.500 0 2-1 3-2.500 4l.5 3-3-2.500C11 10 8 9 8 5.500 8 2.500 10 1 14 1z" fill="#f6f6f8" stroke="#8c8c92" />
            <path d="M6 6c3 0 5 1.500 5 4s-2 4-5 4l-2.500 1.500.2-2C2 13 1 12 1 10c0-2.500 2-4 5-4z" fill="#f6f6f8" stroke="#8c8c92" />
          </svg></button>
        </div>
      </div>
      <div class="tools">
        <div class="group low"><span class="grip"></span>${DRAWING.map((t) => this.tool(t))}</div>
        <div class="group low"><span class="grip"></span>${PERIODS.map((t) => this.tool(t))}</div>
      </div>
      <main class="desk">${CHARTS.map((c) => html`<chart-window .chart=${c}></chart-window>`)}</main>
      <footer class="tabs">
        ${TABS.map((t, i) => html`<button class=${classMap({ tab: true, active: i === 0, short: i === 5 })}><span class="txt">${t}</span></button>`)}
        <div class="arrows">
          <button aria-label="Назад"><svg viewBox="0 0 5 8"><path d="M4 0v8L0 4z" fill="#9a9a9a" /></svg></button>
          <button aria-label="Вперед"><svg viewBox="0 0 5 8"><path d="M1 0v8l4-4z" fill="#9a9a9a" /></svg></button>
        </div>
      </footer>`;
  }
}
